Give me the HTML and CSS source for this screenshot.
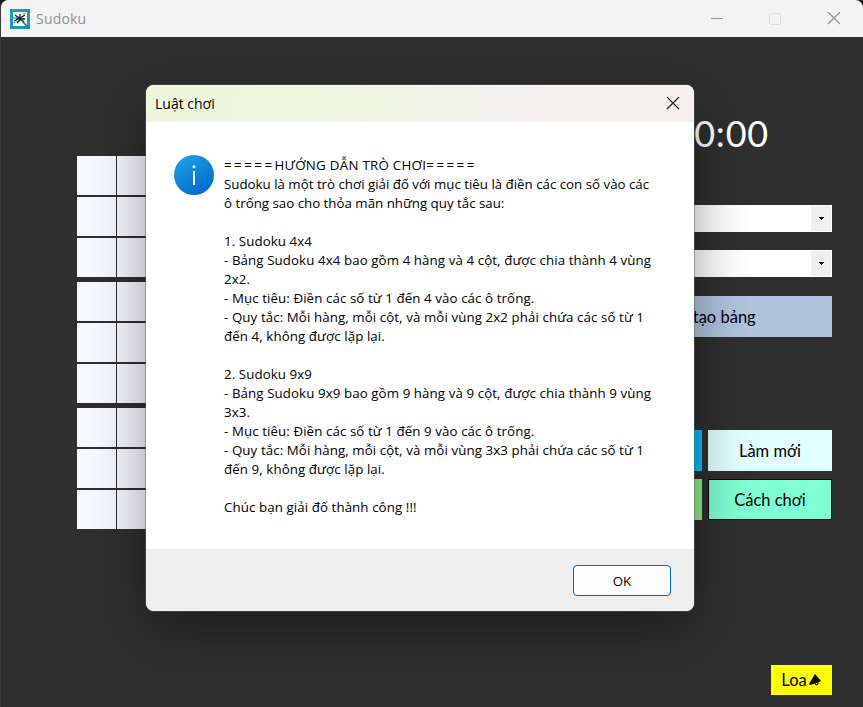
FILE: index.html
```html
<!DOCTYPE html>
<html lang="vi">
<head>
<meta charset="utf-8">
<title>Sudoku</title>
<link rel="stylesheet" href="styles.css">
</head>
<body>
<div class="window">
  <header class="titlebar">
    <svg class="app-icon" width="20" height="20" viewBox="0 0 20 20">
      <path fill="#1b9bb5" d="M0 0h20v20H0z"/>
      <path fill="#fdf8e0" d="M3 3h14v14H3z"/>
      <path stroke="#63b9cf" stroke-width="1.3" d="M3 9h5M13 5l3-1M4 14l3-2"/>
      <path stroke="#102a43" stroke-width="1.3" fill="none" d="M5 6l4 3M4 12l6-3 5-3M6 10h9M10 5v5M8 8l6 5M7 14l4-4"/>
      <path stroke="#1d6fa5" stroke-width="1.5" d="M12 12l7 7"/>
    </svg>
    <span class="app-name">Sudoku</span>
    <svg class="controls" width="132" height="14" viewBox="0 0 132 14" fill="none">
      <path stroke="#929292" d="M0 6.5h12"/>
      <rect x="58.5" y="1.500" width="11" height="11" rx="1" stroke="#dedede"/>
      <path stroke="#8c8c8c" stroke-width="1.2" d="M117 0l12 12M129 0l-12 12"/>
    </svg>
  </header>
  <main class="game">
    <div class="board">
      <div class="band"><i></i><i></i><i></i><i></i><i></i><i></i><i></i><i></i><i></i></div>
      <div class="band"><i></i><i></i><i></i><i></i><i></i><i></i><i></i><i></i><i></i></div>
      <div class="band"><i></i><i></i><i></i><i></i><i></i><i></i><i></i><i></i><i></i></div>
    </div>
    <aside class="panel">
      <div class="timer">0:00:00</div>
      <div class="select"><span class="drop"><svg width="5" height="3"><path d="M0 0h5v1H4v1H3v1H2V2H1V1H0z"/></svg></span></div>
      <div class="select"><span class="drop"><svg width="5" height="3"><path d="M0 0h5v1H4v1H3v1H2V2H1V1H0z"/></svg></span></div>
      <div class="btn create">Khởi tạo bảng</div>
      <div class="actions">
        <div class="btn blue"></div>
        <div class="btn renew">Làm mới</div>
        <div class="btn green"></div>
        <div class="btn howto">Cách chơi</div>
      </div>
      <div class="btn speaker">Loa<svg width="13" height="13" viewBox="0 0 13 13"><path d="M6 0l6 7-3 1.500-8 2.500L0 10z"/><path d="M6 8v2q2 2 3 0V7" fill="none" stroke="#000"/></svg></div>
    </aside>
  </main>
</div>
<div class="dialog">
  <div class="dialog-title"><span>Luật chơi</span>
    <svg width="14" height="14" viewBox="0 0 14 14"><path stroke="#1a1a1a" stroke-width="1.200" d="M1 0l12 12M13 0L1 12"/></svg>
  </div>
  <div class="dialog-body">
    <svg class="info" width="40" height="40" viewBox="0 0 40 40">
      <defs><linearGradient id="g" x1="0.2" y1="0" x2="0.8" y2="1"><stop offset="0" stop-color="#1f9fe6"/><stop offset="1" stop-color="#0069cc"/></linearGradient></defs>
      <circle cx="20" cy="20" r="20" fill="url(#g)"/>
      <circle cx="20" cy="11.800" r="1.500" fill="#fff"/>
      <path stroke="#fff" stroke-width="2" d="M20 16v14"/>
    </svg>
    <div class="rules">
      <p class="heading"><span class="eq">=====</span>HƯỚNG DẪN TRÒ CHƠI<span class="eq">=====</span></p>
      <p>Sudoku là một trò chơi giải đố với mục tiêu là điền các con số vào các<br>ô trống sao cho thỏa mãn những quy tắc sau:</p>
      <p class="section">1. Sudoku 4x4<br>- Bảng Sudoku 4x4 bao gồm 4 hàng và 4 cột, được chia thành 4 vùng<br>2x2.<br>- Mục tiêu: Điền các số từ 1 đến 4 vào các ô trống.<br>- Quy tắc: Mỗi hàng, mỗi cột, và mỗi vùng 2x2 phải chứa các số từ 1<br>đến 4, không được lặp lại.</p>
      <p class="section">2. Sudoku 9x9<br>- Bảng Sudoku 9x9 bao gồm 9 hàng và 9 cột, được chia thành 9 vùng<br>3x3.<br>- Mục tiêu: Điền các số từ 1 đến 9 vào các ô trống.<br>- Quy tắc: Mỗi hàng, mỗi cột, và mỗi vùng 3x3 phải chứa các số từ 1<br>đến 9, không được lặp lại.</p>
      <p class="section">Chúc bạn giải đố thành công !!!</p>
    </div>
  </div>
  <div class="dialog-footer"><div class="ok">OK</div></div>
</div>
</body>
</html>
```

FILE: styles.css
```css
* { box-sizing: border-box; }
body {
  margin: 0;
  width: 863px;
  height: 707px;
  overflow: hidden;
  background: #1c1c1c;
  font-family: "Open Sans", "Noto Sans", sans-serif;
  color: #000;
}
svg { display: block; flex: none; }
p { margin: 0; }
.window {
  height: 707px;
  border-left: 1px solid #3c3c3c;
  border-radius: 8px 8px 0 0;
  overflow: hidden;
  background: #2f2f2f;
}
.titlebar {
  display: flex;
  align-items: center;
  height: 37px;
  padding: 0 20px 0 9px;
  background: #f3f3f3;
}
.app-name {
  margin-left: 6px;
  font-size: 14px;
  letter-spacing: 0.2px;
  color: #919191;
}
.controls { margin-left: auto; }
.game {
  display: flex;
  justify-content: space-between;
  height: 670px;
  padding: 0 31px 0 76px;
}
.board {
  display: flex;
  flex-direction: column;
  gap: 5px;
  padding-top: 119px;
}
.band {
  display: grid;
  grid-template-columns: repeat(9, 40px);
  width: 359px;
  height: 121px;
  overflow: hidden;
  background: repeating-linear-gradient(#f8f8ff 0 39px, #2f2f2f 39px 41px);
}
.band i { border-right: 1px solid #2f2f2f; }
.panel {
  display: flex;
  flex-direction: column;
  width: 254px;
  padding-top: 71px;
  font-family: Lato, "Open Sans", sans-serif;
  font-size: 16.5px;
}
.timer {
  height: 50px;
  margin-bottom: 47px;
  text-align: center;
  font-size: 36px;
  letter-spacing: 0.8px;
  line-height: 50px;
  color: #fff;
}
.select {
  display: flex;
  justify-content: flex-end;
  height: 27px;
  margin-bottom: 18px;
  padding: 1px;
  background: #fff;
}
.drop {
  display: flex;
  align-items: center;
  justify-content: center;
  width: 20px;
  background: #f0f0f0;
}
.btn {
  display: flex;
  align-items: center;
  justify-content: center;
  height: 41px;
}
.create { margin-top: 1px; background: #b0c4de; }
.actions {
  display: grid;
  grid-template-columns: 124px 124px;
  gap: 8px 6px;
  margin-top: 93px;
}
.blue { background: #00bfff; }
.renew { background: #e0ffff; }
.green { background: #90ee90; }
.howto { border: 1px solid #000; background: #7fffd4; }
.speaker {
  align-self: flex-end;
  width: 61px;
  height: 30px;
  margin-top: 145px;
  gap: 2px;
  background: #ff0;
}
.dialog {
  position: absolute;
  left: 146px;
  top: 85px;
  width: 548px;
  height: 526px;
  border-radius: 8px;
  background: #fff;
  box-shadow: 0 0 0 1px rgba(90, 90, 90, 0.45), 0 18px 56px rgba(0, 0, 0, 0.4);
  overflow: hidden;
}
.dialog-title {
  display: flex;
  align-items: center;
  justify-content: space-between;
  height: 37px;
  padding: 0 14px 0 9px;
  background: linear-gradient(100deg, #edf7da 0%, #eff6e1 35%, #f5f1ef 75%, #f6f1f0 100%);
  font-size: 14px;
}
.dialog-body {
  display: flex;
  gap: 10px;
  height: 427px;
  padding: 33px 28px 0;
}
.rules {
  padding-top: 1px;
  font-size: 13.3px;
  line-height: 19px;
  white-space: nowrap;
}
.section {
  margin-top: 19px;
  letter-spacing: 0.09px;
}
.heading { letter-spacing: 0.28px; }
.eq { letter-spacing: 2.5px; }
.dialog-footer {
  display: flex;
  justify-content: flex-end;
  height: 62px;
  padding: 16px 23px 0 0;
  background: #efefef;
}
.ok {
  width: 98px;
  height: 31px;
  border: 1px solid #0067c0;
  border-radius: 4px;
  background: #fdfdfd;
  font-size: 13.3px;
  line-height: 30px;
  text-align: center;
}
```
